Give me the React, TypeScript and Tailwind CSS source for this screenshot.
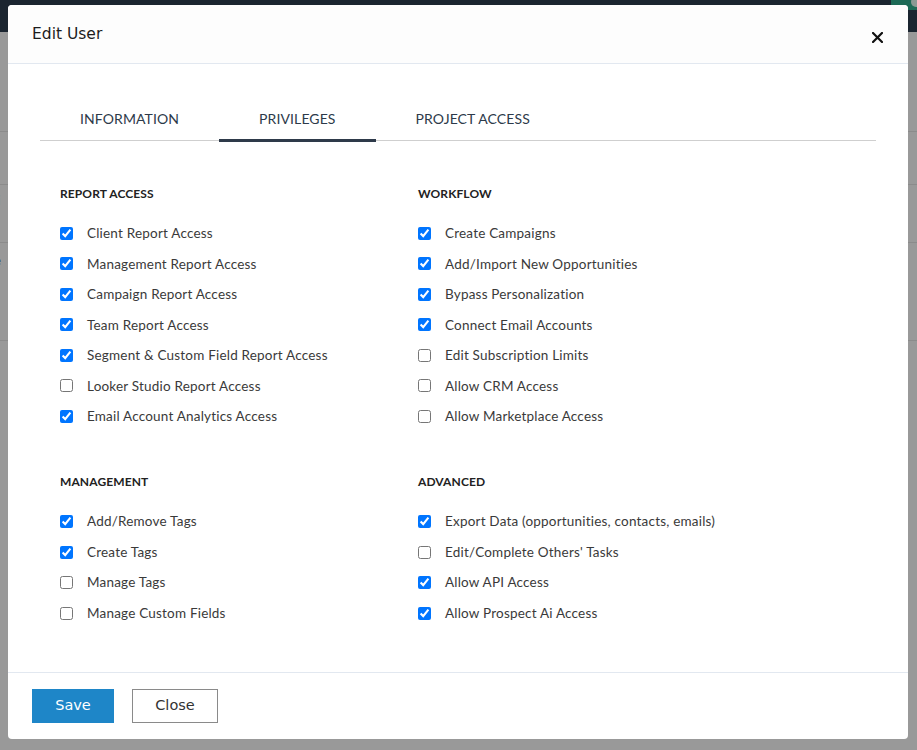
import React from "react";

const body = { fontFamily: "Lato, 'Open Sans', sans-serif" };
const title = { fontFamily: "'DejaVu Sans', Verdana, sans-serif" };

type Item = [string, boolean];

const sections: { title: string; items: Item[] }[][] = [
  [
    {
      title: "REPORT ACCESS",
      items: [
        ["Client Report Access", true],
        ["Management Report Access", true],
        ["Campaign Report Access", true],
        ["Team Report Access", true],
        ["Segment & Custom Field Report Access", true],
        ["Looker Studio Report Access", false],
        ["Email Account Analytics Access", true],
      ],
    },
    {
      title: "MANAGEMENT",
      items: [
        ["Add/Remove Tags", true],
        ["Create Tags", true],
        ["Manage Tags", false],
        ["Manage Custom Fields", false],
      ],
    },
  ],
  [
    {
      title: "WORKFLOW",
      items: [
        ["Create Campaigns", true],
        ["Add/Import New Opportunities", true],
        ["Bypass Personalization", true],
        ["Connect Email Accounts", true],
        ["Edit Subscription Limits", false],
        ["Allow CRM Access", false],
        ["Allow Marketplace Access", false],
      ],
    },
    {
      title: "ADVANCED",
      items: [
        ["Export Data (opportunities, contacts, emails)", true],
        ["Edit/Complete Others' Tasks", false],
        ["Allow API Access", true],
        ["Allow Prospect Ai Access", true],
      ],
    },
  ],
];

function Section({ title: t, items, last }: { title: string; items: Item[]; last?: boolean }) {
  return (
    <div className={last ? "" : "mb-[41.75px]"}>
      <div className="h-[18px] flex items-center text-[12px] font-bold text-[#222] tracking-[0.1px]">{t}</div>
      <div className="mt-[15px]">
        {items.map(([label, checked]) => (
          <label key={label} className="h-[30.5px] flex items-center gap-[14px] text-[13.5px] tracking-[0.2px] text-[#3a3a3a]">
            <input type="checkbox" defaultChecked={checked} className="m-0 w-[13px] h-[13px]" />
            <span>{label}</span>
          </label>
        ))}
      </div>
    </div>
  );
}

export default function App() {
  return (
    <div className="relative w-[917px] h-[750px] overflow-hidden bg-[#999999]" style={body}>
      {/* underlying page */}
      <div className="h-[32px] bg-[#1b2530]" />
      <div className="h-[100px] border-b border-[#8b8b8b]" />
      <div className="h-[53px] border-b border-[#8b8b8b]" />
      <div className="h-[58px] border-b border-[#8b8b8b] relative">
        <span className="absolute left-[-10px] top-[6px] text-[13px] text-[#2f4a66]">oi</span>
      </div>
      <div className="h-[98px] border-b border-[#8b8b8b] relative">
        <span className="absolute left-[-6px] top-[8px] text-[13px] text-[#2b2b2b]">e</span>
      </div>
      <div className="absolute right-0 top-0 w-[26px] h-[10px] bg-[#1d6a56]">
        <div className="absolute right-[-4px] top-[-3px] w-[10px] h-[10px] rounded-full bg-[#8a9a94]" />
      </div>

      {/* modal */}
      <div className="absolute left-[8px] top-[5px] w-[900px] h-[734px] bg-white rounded-[4px] flex flex-col overflow-hidden">
        <div className="h-[58px] bg-[#fdfdfd] flex items-center justify-between pl-[24px] pr-[25px] border-b border-[#e2e8f0] box-content">
          <div className="text-[15.5px] text-[#1d1d1d] pt-[2px]" style={title}>Edit User</div>
          <svg width="11" height="11" viewBox="0 0 11 11" className="mt-[7px]">
            <path d="M1 1 L10 10 M10 1 L1 10" stroke="#111" strokeWidth="2.2" strokeLinecap="square" />
          </svg>
        </div>

        <div className="px-[32px] pt-[33px] pb-[44px]">
          <div className="flex border-b border-[#cfcfcf] h-[44px]">
            {["INFORMATION", "PRIVILEGES", "PROJECT ACCESS"].map((t) => {
              const active = t === "PRIVILEGES";
              return (
                <div
                  key={t}
                  className="relative px-[40px] flex items-center text-[14px] text-[#2d3a4a] tracking-[0.1px]"
                >
                  {t}
                  {active && <div className="absolute left-0 right-0 bottom-[-2px] h-[3px] bg-[#2e3a4a]" />}
                </div>
              );
            })}
          </div>

          <div className="grid grid-cols-[358px_1fr] pl-[20px] mt-[44px]">
            {sections.map((col, i) => (
              <div key={i}>
                {col.map((s, j) => (
                  <Section key={s.title} title={s.title} items={s.items} last={j === col.length - 1} />
                ))}
              </div>
            ))}
          </div>
        </div>

        <div className="border-t border-[#e2e8f0] px-[24px] pt-[16px] flex gap-[18px]">
          <button className="w-[82px] h-[34px] bg-[#1e86c8] text-white text-[14.5px]" style={title}>
            Save
          </button>
          <button className="w-[86px] h-[34px] bg-white border border-[#8a8a8a] text-[#333] text-[14.5px]" style={title}>
            Close
          </button>
        </div>
      </div>
    </div>
  );
}
